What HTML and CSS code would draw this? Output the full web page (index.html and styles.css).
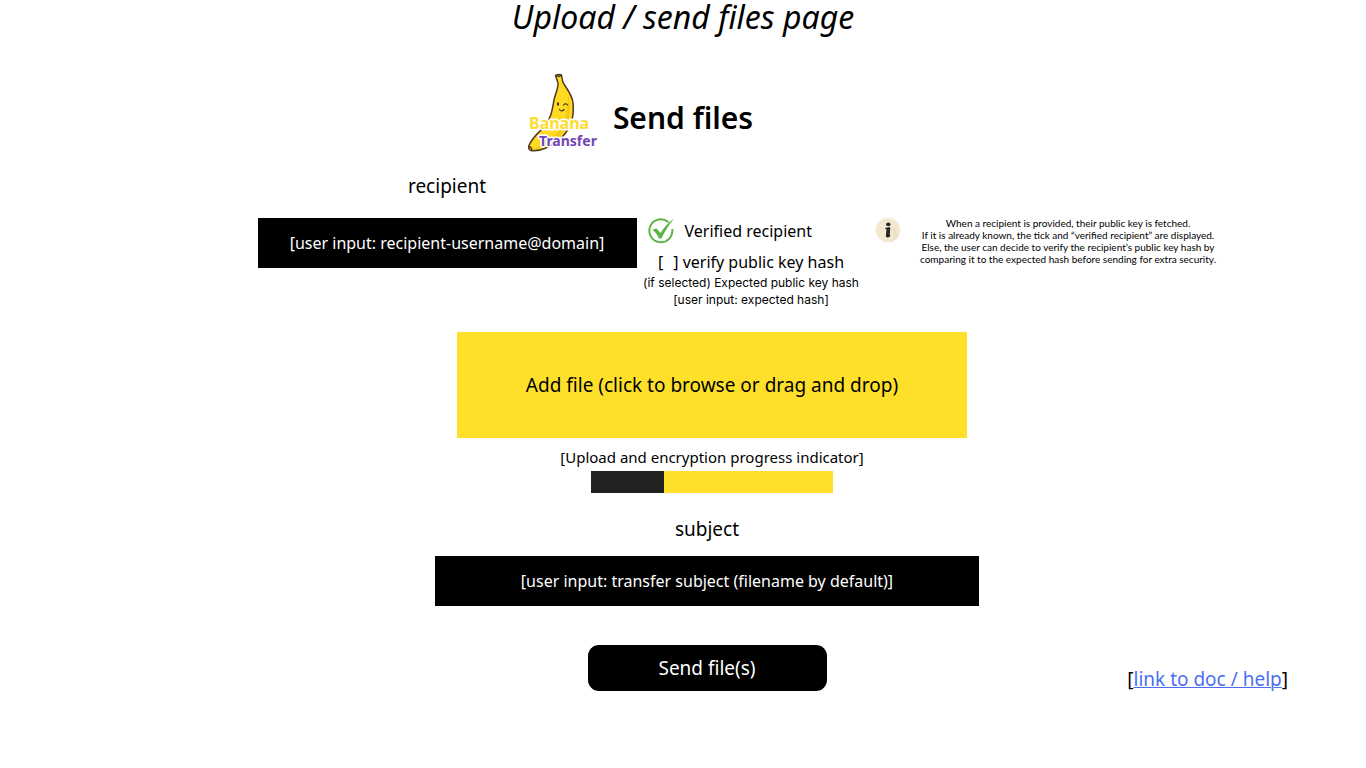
FILE: index.html
```html
<!DOCTYPE html>
<html lang="en">
<head>
<meta charset="utf-8">
<meta name="viewport" content="width=device-width, initial-scale=1">
<title>Banana Transfer – Send files</title>
<link rel="stylesheet" href="styles.css">
</head>
<body>
<p class="page-label">Upload / send files page</p>
<header class="brand">
  <svg class="logo" viewBox="0 0 70 80" role="img" aria-label="Banana Transfer">
    <path d="M28.500 2.500 Q31.500 .8 34.500 2 L35.500 8 C37 13 45 20 46 30 C47.500 44 43 57 33 66 C25 73 13 79 4 77.500 Q1 76.500 1.800 73 C4 66 11 60 17 54 C24 46 25 38 27 27 C28.500 20 31.500 15 31 10 Z" fill="#ffdc23" stroke="#533a20" stroke-width="1.500" stroke-linejoin="round"/>
    <path d="M41 22 C44 29 44 44 39 54 C34 65 20 74 5 76.500 C18 71 29 63 35 52 C40 42 41 32 41 22Z" fill="#f8c914"/>
    <path d="M29 2.500 Q32 4.500 34.500 2 M2 74 Q4 73 5 77" fill="none" stroke="#533a20" stroke-width="1.500"/>
    <ellipse cx="31" cy="31" rx="1.100" ry="1.700" fill="#3b2a18"/>
    <path d="M36.500 32 Q38.500 29.500 40.500 32 M32.500 36.500 Q34.500 39.500 37 36.500" fill="none" stroke="#3b2a18" stroke-width="1.200" stroke-linecap="round"/>
    <text class="logo-top" x="2" y="56">Banana</text>
    <text class="logo-bottom" x="12" y="73">Transfer</text>
  </svg>
  <h1 class="title">Send files</h1>
</header>
<form class="form">
  <section class="recipient">
    <div class="field">
      <label class="label" for="recipient">recipient</label>
      <input class="box" id="recipient" type="text" placeholder="[user input: recipient-username@domain]">
    </div>
    <div class="verify">
      <p class="verified">
        <svg class="icon" viewBox="0 0 26 26" aria-hidden="true">
          <path d="M20.500 4.200 A11.500 11.500 0 1 0 24.200 11" fill="none" stroke="#5db446" stroke-width="1.900"/>
          <path d="M4.500 11.500 L8.500 10.500 L12.500 15 C16 9.500 20 4.500 26 .8 C21 6.500 17 13 13.500 20.500 L11 20.500 Q8.500 15 4.500 11.500Z" fill="#5db446"/>
        </svg>
        <span>Verified recipient</span>
      </p>
      <label class="check"><span>[</span><input class="check-input" type="checkbox"><span>] verify public key hash</span></label>
      <label class="hint" for="hash">(if selected) Expected public key hash</label>
      <input class="hash" id="hash" type="text" placeholder="[user input: expected hash]">
    </div>
    <aside class="info">
      <svg class="icon" viewBox="0 0 26 26" aria-hidden="true">
        <circle cx="13" cy="13" r="12.300" fill="#f4e8d1"/>
        <path d="M18 8 Q22 13 23 20 Q20 24 16 24 Q21 19 17 14Z" fill="#eddfc5"/>
        <ellipse cx="13.300" cy="7.300" rx="2.200" ry="1.900" fill="#292522"/>
        <path d="M10.300 11 Q12.500 10 15.300 10.300 L14.800 18 Q15 18.800 15.800 18.500 Q14.500 20.800 12 20.500 Q10.700 20.200 10.900 18.500 L11.500 12.500 Q11.200 11.600 10.300 12Z" fill="#292522"/>
      </svg>
      <p class="info-text">When a recipient is provided, their public key is fetched.<br>If it is already known, the tick and “verified recipient” are displayed.<br>Else, the user can decide to verify the recipient’s public key hash by<br>comparing it to the expected hash before sending for extra security.</p>
    </aside>
  </section>
  <section class="upload">
    <button class="dropzone" type="button">Add file (click to browse or drag and drop)</button>
    <p class="progress-label" id="progress-label">[Upload and encryption progress indicator]</p>
    <div class="progress" role="progressbar" aria-labelledby="progress-label" aria-valuenow="30" aria-valuemin="0" aria-valuemax="100"><div class="progress-fill" style="width:30%"></div></div>
  </section>
  <section class="subject">
    <label class="label" for="subject">subject</label>
    <input class="box" id="subject" type="text" placeholder="[user input: transfer subject (filename by default)]">
  </section>
  <div class="actions">
    <button class="send" type="submit">Send file(s)</button>
    <p class="help">[<a class="help-link" href="#help">link to doc / help</a>]</p>
  </div>
</form>
</body>
</html>
```
FILE: styles.css
```css
* { box-sizing: border-box; }
body {
  margin: 0;
  background: #fff;
  color: #000;
  font-family: "Noto Sans", "Open Sans", sans-serif;
  font-size: 16px;
}
p, h1 { margin: 0; }
input, button { font: inherit; border: 0; border-radius: 0; }
input::placeholder { color: inherit; opacity: 1; }

.page-label {
  font-size: 32px;
  line-height: 34px;
  font-style: italic;
  text-align: center;
}
.brand {
  display: flex;
  align-items: center;
  justify-content: center;
  gap: 16px;
  margin-top: 39px;
  padding-right: 86px;
}
.logo { width: 70px; height: 80px; overflow: visible; }
.logo-top, .logo-bottom {
  font-family: "Noto Sans", sans-serif;
  font-weight: 700;
  stroke: #fff;
  stroke-width: 3px;
  stroke-linejoin: round;
  paint-order: stroke;
}
.logo-top { font-size: 16px; fill: #fddc30; }
.logo-bottom { font-size: 14px; fill: #7046b4; }
.title { padding-top: 9px; font-size: 30px; line-height: 40px; font-weight: 600; }

.form { display: flex; flex-direction: column; align-items: stretch; }
.recipient {
  display: flex;
  align-items: flex-end;
  justify-content: center;
  margin-top: 19px;
  padding-left: 112px;
}
.recipient > * { flex-shrink: 0; }
.field { width: 379px; align-self: flex-start; }
.label {
  display: block;
  margin-bottom: 18px;
  font-size: 19px;
  line-height: 28px;
  text-align: center;
}
.box {
  display: block;
  width: 100%;
  height: 50px;
  background: #000;
  color: #fff;
  text-align: center;
}
.verify {
  width: 217px;
  margin: 46px 15px 0 6px;
  display: flex;
  flex-direction: column;
  align-items: center;
}
.verified {
  display: flex;
  align-items: center;
  gap: 11px;
  align-self: flex-start;
  padding-left: 5px;
}
.icon { width: 26px; height: 26px; flex: none; }
.check { display: flex; align-items: center; margin-top: 6px; line-height: 24px; }
.check-input { appearance: none; width: 10px; height: 16px; margin: 0; }
.hint, .hash { font-family: Inter, "Noto Sans", sans-serif; }
.hint { margin-top: 1px; font-size: 12px; line-height: 16px; white-space: nowrap; }
.hash {
  width: 100%;
  height: 16px;
  padding: 0;
  font-size: 12px;
  text-align: center;
  background: none;
}
.info { display: flex; align-self: flex-start; gap: 15px; margin-top: 45px; }
.info-text {
  width: 305px;
  font-family: Lato, "Noto Sans", sans-serif;
  font-size: 10px;
  line-height: 12px;
  text-align: center;
  white-space: nowrap;
}

.upload {
  display: flex;
  flex-direction: column;
  align-items: center;
  margin-top: 25px;
  padding-left: 58px;
}
.dropzone { width: 510px; height: 106px; background: #fee02b; color: #000; font-size: 19px; }
.progress-label { margin-top: 9px; font-size: 15px; line-height: 20px; }
.progress { width: 242px; height: 22px; margin-top: 4px; background: #fee02b; }
.progress-fill { height: 100%; background: #222; }

.subject { width: 544px; margin: 22px 0 0 48px; align-self: center; }
.subject .label { margin-bottom: 13px; }
.actions {
  display: grid;
  grid-template-columns: 1fr 239px 1fr;
  margin-top: 39px;
  padding: 0 78px 0 126px;
}
.send {
  grid-column: 2;
  height: 46px;
  border-radius: 11px;
  background: #000;
  color: #fff;
  font-size: 19px;
}
.help { justify-self: end; align-self: end; font-size: 19px; line-height: 24px; }
.help-link { color: #4c6fef; text-decoration-thickness: 1px; }
```
